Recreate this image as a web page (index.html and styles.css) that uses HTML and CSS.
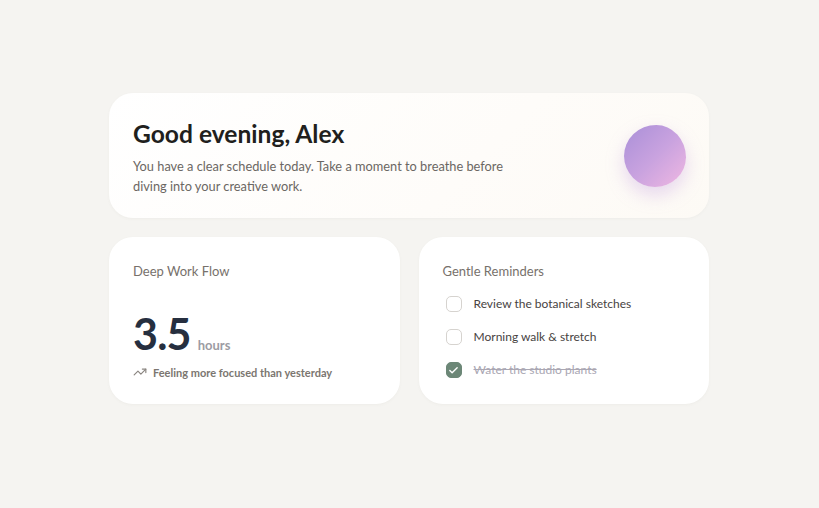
FILE: index.html
```html
<!DOCTYPE html>
<html lang="en">
<head>
<meta charset="utf-8">
<title>Dashboard</title>
<link rel="stylesheet" href="styles.css">
</head>
<body>
<main class="wrap">
  <section class="card hero">
    <div class="hero-text">
      <h1 class="title">Good evening, Alex</h1>
      <p class="lead">You have a clear schedule today. Take a moment to breathe before diving into your creative work.</p>
    </div>
    <div class="orb"></div>
  </section>
  <div class="grid">
    <section class="card stat">
      <h2 class="card-title">Deep Work Flow</h2>
      <div class="metric"><span class="num">3.5</span><span class="unit">hours</span></div>
      <div class="trend">
        <svg class="trend-icon" viewBox="0 0 24 24" width="14" height="14" fill="none" stroke="currentColor" stroke-width="2" stroke-linecap="round" stroke-linejoin="round"><polyline points="22 7 13.5 15.5 8.5 10.5 2 17"/><polyline points="16 7 22 7 22 13"/></svg>
        <span>Feeling more focused than yesterday</span>
      </div>
    </section>
    <section class="card todo">
      <h2 class="card-title">Gentle Reminders</h2>
      <ul class="list">
        <li class="item"><span class="box"></span><span class="label">Review the botanical sketches</span></li>
        <li class="item"><span class="box"></span><span class="label">Morning walk &amp; stretch</span></li>
        <li class="item done"><span class="box checked"><svg viewBox="0 0 24 24" width="11" height="11" fill="none" stroke="#fff" stroke-width="3" stroke-linecap="round" stroke-linejoin="round"><polyline points="20 6 9 17 4 12"/></svg></span><span class="label">Water the studio plants</span></li>
      </ul>
    </section>
  </div>
</main>
</body>
</html>
```
FILE: styles.css
```css
* { box-sizing: border-box; }
html, body { margin: 0; padding: 0; }
body {
  background: #f5f4f1;
  font-family: Lato, "Open Sans", sans-serif;
  min-height: 508px;
}
.wrap {
  width: 600px;
  margin-left: 109px;
  padding-top: 93px;
  display: flex;
  flex-direction: column;
  gap: 19px;
}
.card {
  background: #fff;
  border-radius: 24px;
  box-shadow: 0 1px 3px rgba(120, 110, 90, 0.05);
}
.hero {
  height: 125px;
  padding: 4px 23px 0 24px;
  display: flex;
  align-items: center;
  justify-content: space-between;
  background: linear-gradient(135deg, #ffffff 0%, #fefcf9 60%, #fdfaf5 100%);
}
.title {
  margin: 0 0 7px;
  font-size: 24.6px;
  font-weight: 700;
  color: #211f1d;
  line-height: 30px;
}
.lead {
  margin: 0;
  font-size: 12.8px;
  line-height: 20px;
  color: #6b6763;
  max-width: 390px;
}
.orb {
  width: 62px;
  height: 62px;
  margin-top: -4px;
  border-radius: 52% 48% 50% 50% / 50% 52% 48% 50%;
  background: linear-gradient(135deg, #a98fd8 0%, #c8a2df 50%, #f0b8e2 100%);
  box-shadow: 0 8px 18px rgba(190, 150, 220, 0.35);
  flex: none;
}
.grid {
  display: grid;
  grid-template-columns: 1fr 1fr;
  gap: 19px;
}
.stat, .todo {
  height: 167px;
  padding: 24px;
}
.card-title {
  margin: 0;
  font-size: 13px;
  font-weight: 400;
  color: #77716b;
  line-height: 20px;
}
.metric {
  margin-top: 28px;
  display: flex;
  align-items: baseline;
  gap: 7px;
}
.num {
  font-size: 43px;
  font-weight: 700;
  color: #262f3f;
  line-height: 50px;
  letter-spacing: -0.8px;
}
.unit {
  font-size: 13px;
  color: #9c9ca3;
  font-weight: 700;
}
.trend {
  margin-top: 6px;
  display: flex;
  align-items: center;
  gap: 6px;
  font-size: 11px;
  font-weight: 700;
  color: #7b7670;
}
.trend-icon { color: #8a8580; }
.list {
  list-style: none;
  margin: 13px 0 0;
  padding: 0;
  display: flex;
  flex-direction: column;
  gap: 13px;
}
.item {
  display: flex;
  align-items: center;
  gap: 12px;
  font-size: 12px;
  color: #47433f;
  line-height: 20px;
  padding-left: 3px;
}
.box {
  width: 16px;
  height: 16px;
  border: 1px solid #d6d3cf;
  border-radius: 5px;
  background: #fff;
  display: flex;
  align-items: center;
  justify-content: center;
  flex: none;
}
.box.checked {
  background: #6c8777;
  border-color: #6c8777;
}
.done .label {
  color: #aaa7b3;
  text-decoration: line-through;
}
```
